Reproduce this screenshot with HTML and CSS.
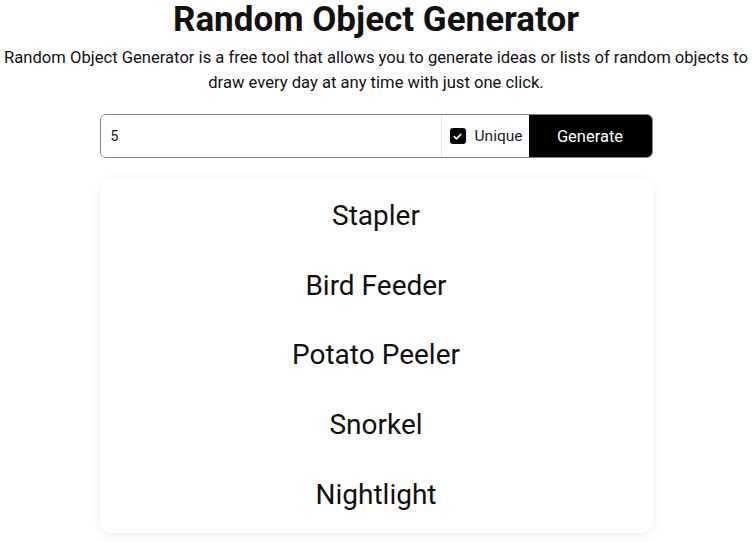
FILE: index.html
```html
<!DOCTYPE html>
<html>
<head>
    <title>Random Object Generator</title>
    <link rel="stylesheet" href="styles.css">
</head>
<body>
    <h1>Random Object Generator</h1>
    <p class="intro">Random Object Generator is a free tool that allows you to generate ideas or lists of random objects to draw every day at any time with just one click.</p>

    <!-- Controls -->
    <div class="controls">
        <input class="count" type="text" value="5">
        <label class="unique">
            <span class="check">
                <svg width="11" height="11" viewBox="0 0 12 12"><path d="M2.5 6.2 L5 8.6 L9.6 3.6" fill="none" stroke="#fff" stroke-width="1.8" stroke-linecap="round" stroke-linejoin="round"/></svg>
            </span>
            Unique
        </label>
        <button class="generate">Generate</button>
    </div>

    <!-- Results -->
    <div class="results">
        <div class="item">Stapler</div>
        <div class="item">Bird Feeder</div>
        <div class="item">Potato Peeler</div>
        <div class="item">Snorkel</div>
        <div class="item">Nightlight</div>
    </div>
</body>
</html>
```

FILE: styles.css
```css
body {
    font-family: Roboto, 'Liberation Sans', sans-serif;
    margin: 0;
    padding: 0 0 10px;
    background-color: #fff;
    color: #111;
}

h1 {
    margin: 0;
    font-size: 35px;
    line-height: 40px;
    font-weight: 700;
    text-align: center;
}

.intro {
    margin: 5px 0 0;
    font-size: 16.6px;
    line-height: 25px;
    text-align: center;
}

.controls {
    display: flex;
    width: 553px;
    height: 44px;
    margin: 19px auto 0;
    border: 1px solid #888;
    border-radius: 6px;
    box-sizing: border-box;
    overflow: hidden;
}

.count {
    flex: 1;
    border: none;
    border-right: 1px solid #e6e6e6;
    padding: 0 10px;
    font-family: inherit;
    font-size: 14px;
    color: #111;
    outline: none;
}

.unique {
    display: flex;
    align-items: center;
    gap: 9px;
    padding: 0 6px 0 8px;
    font-size: 15.5px;
    color: #222;
}

.check {
    display: flex;
    align-items: center;
    justify-content: center;
    width: 16px;
    height: 16px;
    background: #000;
    border-radius: 3px;
}

.generate {
    width: 123px;
    border: none;
    background: #000;
    color: #fff;
    font-family: inherit;
    font-size: 16.5px;
    cursor: pointer;
}

.results {
    width: 553px;
    margin: 20px auto 0;
    padding: 3px 0 4px;
    background: #fff;
    border-radius: 12px;
    box-shadow: 0 2px 10px rgba(0,0,0,0.08);
}

.item {
    height: 69.6px;
    display: flex;
    align-items: center;
    justify-content: center;
    font-size: 28px;
    color: #111;
}
```
